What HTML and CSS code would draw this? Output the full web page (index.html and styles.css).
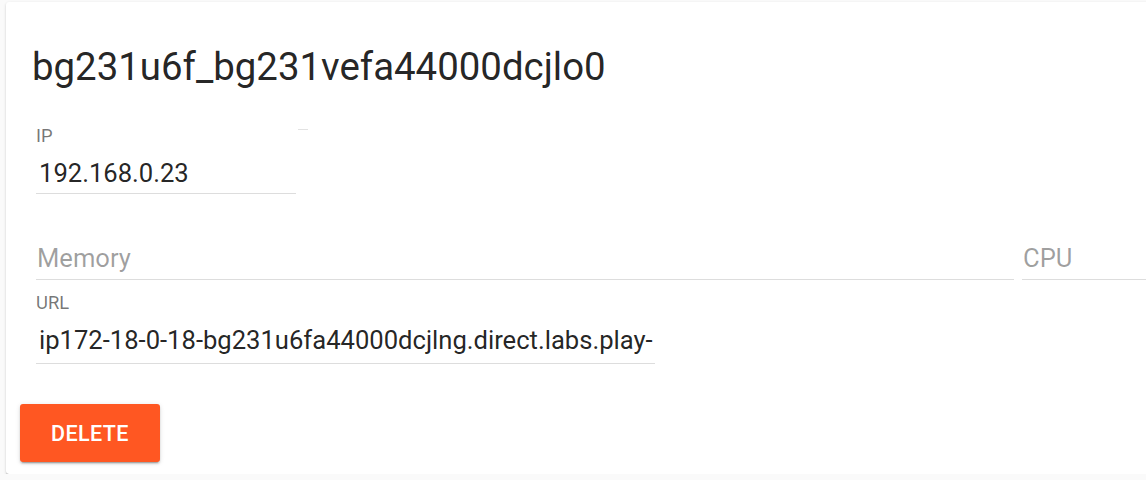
FILE: index.html
```html
<!DOCTYPE html>
<html lang="en">
<head>
<meta charset="utf-8">
<title>Instance</title>
<link rel="stylesheet" href="styles.css">
</head>
<body>
<div class="card">
  <div class="card-title">bg231u6f_bg231vefa44000dcjlo0</div>
  <div class="fields">
    <div class="row row-ip">
      <div class="field field-ip">
        <div class="label">IP</div>
        <div class="value">192.168.0.23</div>
      </div>
      <div class="stub"></div>
    </div>
    <div class="row row-res">
      <div class="field field-mem">
        <div class="value placeholder">Memory</div>
      </div>
      <div class="field field-cpu">
        <div class="value placeholder">CPU</div>
      </div>
    </div>
    <div class="row row-url">
      <div class="field field-url">
        <div class="label">URL</div>
        <div class="value url">ip172-18-0-18-bg231u6fa44000dcjlng.direct.labs.play-</div>
      </div>
    </div>
  </div>
  <div class="actions">
    <button class="btn-delete" type="button">DELETE</button>
  </div>
</div>
</body>
</html>
```
FILE: styles.css
```css
html, body {
  margin: 0;
  padding: 0;
  overflow: hidden;
  background: #fafafa;
  font-family: Roboto, "Liberation Sans", sans-serif;
}

.card {
  margin: 2px 0 0 6px;
  width: 1200px;
  background: #ffffff;
  border-radius: 3px;
  box-shadow: 0 2px 1px -1px rgba(0,0,0,0.25), 0 1px 1px 0 rgba(0,0,0,0.16), 0 1px 3px 0 rgba(0,0,0,0.14);
  padding-top: 41px;
  padding-bottom: 12px;
}

.card-title {
  padding-left: 26px;
  font-size: 38.4px;
  line-height: 48px;
  color: rgba(0,0,0,0.87);
}

.fields {
  margin-left: 30px;
  margin-top: 35px;
}

.row {
  display: flex;
  align-items: flex-start;
}

.row-ip {
  gap: 2px;
}

.stub {
  width: 10px;
  margin-top: 3px;
  height: 0;
  border-bottom: 1px solid #e2e2e2;
}

.field {
  border-bottom: 1px solid #dddddd;
}

.label {
  font-size: 18.4px;
  line-height: 20px;
  color: rgba(0,0,0,0.54);
}

.value {
  margin-top: 12px;
  font-size: 25.6px;
  line-height: 30px;
  padding: 0 0 5px 3px;
  color: rgba(0,0,0,0.87);
  white-space: nowrap;
  overflow: hidden;
}

.placeholder {
  color: rgba(0,0,0,0.38);
  padding-left: 1px;
  padding-bottom: 6px;
}

.field-ip {
  width: 260px;
}

.row-res {
  margin-top: 37px;
  gap: 8px;
}

.field-mem {
  width: 978px;
}

.field-cpu {
  flex: 1;
}

.row-url {
  margin-top: 13px;
}

.field-url {
  width: 619px;
}

.url {
  padding-bottom: 8px;
}

.actions {
  padding: 40px 0 0 14px;
}

.btn-delete {
  display: block;
  width: 140px;
  height: 58px;
  border: none;
  border-radius: 3px;
  background: #ff5722;
  color: #ffffff;
  font-family: Roboto, "Liberation Sans", sans-serif;
  font-weight: 500;
  font-size: 21.5px;
  letter-spacing: 0.4px;
  box-shadow: 0 3px 1px -2px rgba(0,0,0,0.2), 0 2px 2px 0 rgba(0,0,0,0.14), 0 1px 5px 0 rgba(0,0,0,0.12);
  cursor: pointer;
}
```
